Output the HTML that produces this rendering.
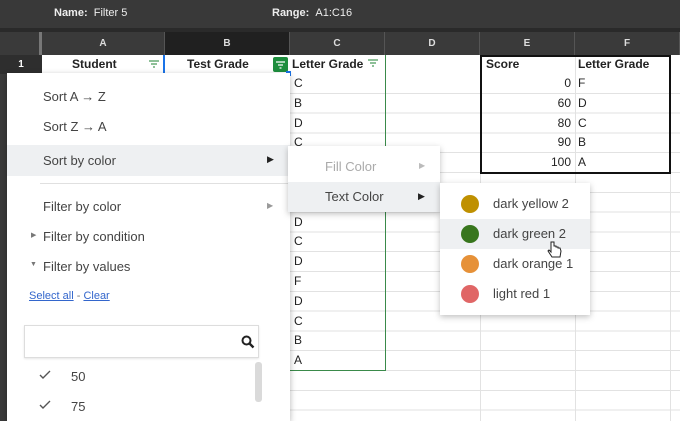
<!DOCTYPE html>
<html><head><style>
*{margin:0;padding:0;box-sizing:border-box}
body{width:680px;height:421px;overflow:hidden;position:relative;background:#fff;font-family:"Liberation Sans",Arial,sans-serif;font-size:13px;color:#222}
.a{position:absolute}
.grid{left:290px;top:74px;width:390px;height:347px;background-image:repeating-linear-gradient(to bottom,transparent 0,transparent 18.8px,#e2e2e2 18.8px,#e2e2e2 19.8px)}
.vl{width:1px;background:#e2e2e2;top:55px;height:366px}
.hd{top:32px;height:23px;background:#3a3a3a;color:#ddd;font-size:10px;font-weight:bold;text-align:center;line-height:23px;border-right:1px solid #555}
.cell{height:20px;line-height:20px}
.mi{left:43px;font-size:13px;color:#444}
.sw{width:18px;height:18px;border-radius:50%;left:461px}
</style></head><body>
<div class="a" style="left:0;top:0;width:680px;height:32px;background:#393939;color:#eee;font-size:11px;font-weight:bold;line-height:26px"><span class="a" style="left:54px">Name:&nbsp;&nbsp;<span style="font-weight:normal">Filter 5</span></span><span class="a" style="left:272px">Range:&nbsp;&nbsp;<span style="font-weight:normal">A1:C16</span></span></div>
<div class="a" style="left:0;top:28px;width:680px;height:4px;background:#2a2a2a"></div>
<div class="a hd" style="left:0;width:42px;background:#3a3a3a;border-right:3px solid #777"></div>
<div class="a hd" style="left:42px;width:123px">A</div>
<div class="a hd" style="left:165px;width:125px;background:#202020">B</div>
<div class="a hd" style="left:290px;width:95px">C</div>
<div class="a hd" style="left:385px;width:95px">D</div>
<div class="a hd" style="left:480px;width:95px">E</div>
<div class="a hd" style="left:575px;width:105px">F</div>
<div class="a" style="left:0;top:55px;width:42px;height:19px;background:#2e2e2e;color:#fff;font-size:10px;font-weight:bold;text-align:center;line-height:19px">1</div>
<div class="a" style="left:0;top:74px;width:42px;height:347px;background:#3a3a3a"></div>
<div class="a grid"></div>
<div class="a vl" style="left:480px"></div><div class="a vl" style="left:575px"></div><div class="a vl" style="left:670px"></div>
<div class="a" style="left:42px;top:55px;width:248px;height:19px;font-weight:bold;font-size:12px;line-height:19px"><span class="a" style="left:30px">Student</span><span class="a" style="left:145px">Test Grade</span>
<svg class="a" style="left:106px;top:4px" width="12" height="10"><path d="M1 2h10M3 5h6M5 8h2" stroke="#4a9a5a" stroke-width="1.2"/></svg>
<div class="a" style="left:231px;top:2px;width:15px;height:15px;background:#1e8e3e;border-radius:2px"><svg width="15" height="15"><path d="M3 5h9M5 8h5M6.5 11h2" stroke="#fff" stroke-width="1.2"/></svg></div></div>
<div class="a" style="left:163px;top:55px;width:2px;height:19px;background:#1a73e8"></div>
<div class="a" style="left:286px;top:71px;width:5px;height:5px;background:#1a73e8"></div>
<div class="a" style="left:385px;top:55px;width:1px;height:316px;background:#3a8a4a"></div>
<div class="a" style="left:290px;top:370px;width:96px;height:1px;background:#3a8a4a"></div>
<div class="a" style="left:292px;top:55px;font-weight:bold;font-size:12px;line-height:19px">Letter Grade <svg width="12" height="10"><path d="M1 2h10M3 5h6M5 8h2" stroke="#4a9a5a" stroke-width="1.2"/></svg></div>
<div class="a" style="left:294px;top:74px;font-size:12px;line-height:19.8px">C<br>B<br>D<br>C<br>&nbsp;<br>&nbsp;<br>&nbsp;<br>D<br>C<br>D<br>F<br>D<br>C<br>B<br>A</div>
<div class="a" style="left:480px;top:55px;width:191px;height:119px;border:2px solid #111;background:transparent"></div>
<div class="a" style="left:486px;top:55px;font-weight:bold;font-size:12px;line-height:19px">Score</div>
<div class="a" style="left:578px;top:55px;font-weight:bold;font-size:12px;line-height:19px">Letter Grade</div>
<div class="a" style="left:480px;top:74px;width:91px;text-align:right;font-size:12px;line-height:19.8px">0<br>60<br>80<br>90<br>100</div>
<div class="a" style="left:578px;top:74px;font-size:12px;line-height:19.8px">F<br>D<br>C<br>B<br>A</div>
<!-- main menu -->
<div class="a" style="left:7px;top:73px;width:283px;height:348px;background:#fff;box-shadow:0 2px 6px rgba(0,0,0,.3)">
<div class="a" style="left:0;top:72px;width:283px;height:31px;background:#eef0f2"></div>
<div class="a" style="left:33px;top:110px;width:249px;height:1px;background:#e0e0e0"></div>
<div class="a mi" style="left:36px;top:16px">Sort A → Z</div>
<div class="a mi" style="left:36px;top:46px">Sort Z → A</div>
<div class="a mi" style="left:36px;top:80px">Sort by color</div>
<div class="a" style="left:260px;top:81px;font-size:9px;color:#222">▶</div>
<div class="a mi" style="left:36px;top:126px">Filter by color</div>
<div class="a" style="left:260px;top:128px;font-size:8px;color:#999">▶</div>
<div class="a" style="left:24px;top:158px;font-size:7px;color:#777">▶</div>
<div class="a mi" style="left:36px;top:156px">Filter by condition</div>
<div class="a" style="left:23px;top:188px;font-size:7px;color:#777">▼</div>
<div class="a mi" style="left:36px;top:186px">Filter by values</div>
<div class="a" style="left:22px;top:217px;font-size:11px;color:#3366cc"><u>Select all</u> <span style="color:#777">-</span> <u>Clear</u></div>
<div class="a" style="left:17px;top:252px;width:235px;height:33px;border:1px solid #ddd;box-shadow:0 1px 2px rgba(0,0,0,.1)"><svg class="a" style="left:216px;top:9px" width="14" height="14"><circle cx="5.5" cy="5.5" r="4" fill="none" stroke="#222" stroke-width="2"/><path d="M8.5 8.5l4 4" stroke="#222" stroke-width="2.4"/></svg></div>
<svg class="a" style="left:32px;top:297px" width="12" height="10"><path d="M1 5l3 3 7-7" stroke="#555" stroke-width="1.4" fill="none"/></svg>
<div class="a mi" style="left:64px;top:296px">50</div>
<svg class="a" style="left:32px;top:327px" width="12" height="10"><path d="M1 5l3 3 7-7" stroke="#555" stroke-width="1.4" fill="none"/></svg>
<div class="a mi" style="left:64px;top:326px">75</div>
<div class="a" style="left:248px;top:289px;width:7px;height:40px;background:#dadada;border-radius:3px"></div>
</div>
<!-- submenu 1 -->
<div class="a" style="left:288px;top:146px;width:152px;height:66px;background:#fff;box-shadow:0 2px 6px rgba(0,0,0,.25)">
<div class="a" style="left:0;top:36px;width:152px;height:30px;background:#eef0f2"></div>
<div class="a" style="left:37px;top:13px;color:#aaa">Fill Color</div>
<div class="a" style="left:131px;top:15px;font-size:8px;color:#bbb">▶</div>
<div class="a" style="left:37px;top:43px;color:#444">Text Color</div>
<div class="a" style="left:130px;top:45px;font-size:9px;color:#222">▶</div>
</div>
<!-- submenu 2 -->
<div class="a" style="left:440px;top:183px;width:150px;height:132px;background:#fff;box-shadow:0 2px 6px rgba(0,0,0,.25)">
<div class="a" style="left:0;top:36px;width:150px;height:30px;background:#eef0f2"></div>
<div class="a sw" style="left:21px;top:12px;background:#bf9000"></div><div class="a" style="left:53px;top:13px;color:#444">dark yellow 2</div>
<div class="a sw" style="left:21px;top:42px;background:#38761d"></div><div class="a" style="left:53px;top:43px;color:#444">dark green 2</div>
<div class="a sw" style="left:21px;top:72px;background:#e69138"></div><div class="a" style="left:53px;top:73px;color:#444">dark orange 1</div>
<div class="a sw" style="left:21px;top:102px;background:#e06666"></div><div class="a" style="left:53px;top:103px;color:#444">light red 1</div>
</div>
<svg class="a" style="left:547px;top:240px" width="16" height="20"><path d="M4 2v10l-2-2-1 1 4 6h8l1-6-1-3-2 0v-1h-2v-1h-2V2z" fill="#fff" stroke="#222" stroke-width="1"/></svg>
</body></html>
